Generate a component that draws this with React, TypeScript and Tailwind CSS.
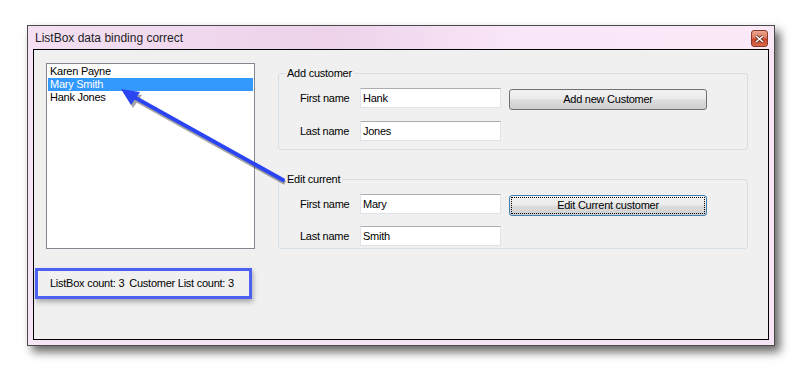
import React from "react";

const font = { fontFamily: '"Liberation Sans", Arial, sans-serif' };

function TextBox({ value }: { value: string }) {
  return (
    <div className="flex h-[20px] w-[141px] items-center border border-[#e2e3ea] border-t-[#abadb3] bg-white pl-[2px] text-[11px] tracking-[-0.25px] text-black">
      {value}
    </div>
  );
}

function Button({ label, focused }: { label: string; focused?: boolean }) {
  return (
    <div
      className={
        "ml-[8px] mt-[1px] flex h-[21px] w-[198px] shrink-0 items-center justify-center rounded-[3px] border bg-[linear-gradient(to_bottom,#f2f2f2_0%,#ebebeb_48%,#dddddd_52%,#cfcfcf_100%)] text-[11px] tracking-[-0.25px] text-black " +
        (focused ? "border-[#3c7fb1] p-[1px]" : "border-[#707070]")
      }
    >
      {focused ? (
        <div className="flex h-full w-full items-center justify-center border border-dotted border-black">
          {label}
        </div>
      ) : (
        label
      )}
    </div>
  );
}

function Row({ label, value, button }: { label: string; value: string; button?: React.ReactNode }) {
  return (
    <div className="flex h-[20px] items-start">
      <span className="w-[60px] self-center text-[11px] tracking-[-0.25px] text-black">{label}</span>
      <TextBox value={value} />
      {button}
    </div>
  );
}

function Group({ title, children, className }: { title: string; children: React.ReactNode; className?: string }) {
  return (
    <div className={"relative w-[470px] rounded-[3px] border border-[#d5dfe5] pl-[21px] pt-[14px] " + (className ?? "")}>
      <span className="absolute left-[6px] top-[-7px] bg-[#f0f0f0] px-[2px] text-[11px] leading-[13px] tracking-[-0.25px] text-black">
        {title}
      </span>
      {children}
    </div>
  );
}

export default function App() {
  const items = ["Karen Payne", "Mary Smith", "Hank Jones"];
  return (
    <div className="relative h-[376px] w-[802px] overflow-hidden bg-white pl-[27px] pt-[25px]" style={font}>
      {/* Window */}
      <div className="flex h-[321px] w-[748px] flex-col border border-[#4a4a4a] bg-[#f7e5f5] px-[5px] pb-[5px] shadow-[5px_6px_9px_rgba(0,0,0,0.6)]">
        {/* Title bar */}
        <div className="-mx-[5px] flex h-[23px] items-center justify-between bg-[linear-gradient(to_right,#f4e0f2_0%,#edd2ea_40%,#f9e6f7_65%,#fbe9f8_100%)] px-[5px]">
          <span className="pl-[2px] text-[12px] text-[#1e1e1e]">ListBox data binding correct</span>
          <div className="mr-[1px] mt-[4px] flex h-[17px] w-[17px] self-start items-center justify-center rounded-[3px] border border-[#8c3a2a] bg-[linear-gradient(to_bottom,#eba590_0%,#de7a5e_45%,#c9452a_55%,#d8694c_100%)]">
            <svg width="9" height="8" viewBox="0 0 9 8">
              <path d="M1 1 L8 7 M8 1 L1 7" stroke="#5a2a20" strokeWidth="3" />
              <path d="M1 1 L8 7 M8 1 L1 7" stroke="#ffffff" strokeWidth="1.6" />
            </svg>
          </div>
        </div>

        {/* Client area */}
        <div className="flex flex-1 border border-black bg-[#f0f0f0]">
          {/* Left column */}
          <div className="flex w-[221px] flex-col">
            <div className="ml-[12px] mt-[13px] h-[186px] w-[209px] border border-[#828790] bg-white px-[1px] pt-[1px]">
              {items.map((it, i) => (
                <div
                  key={it}
                  className={
                    "h-[13px] pl-[2px] text-[11px] leading-[13px] tracking-[-0.25px] " +
                    (i === 1 ? "bg-[#3399ff] text-white" : "text-black")
                  }
                >
                  {it}
                </div>
              ))}
            </div>
            <div className="ml-[1px] mt-[19px] flex h-[31px] w-[217px] items-center gap-[5px] border-[3px] border-[#4d60f4] pl-[12px] text-[11px] tracking-[-0.25px] text-black shadow-[1px_3px_5px_rgba(0,0,0,0.3)]">
              <span>ListBox count: 3</span>
              <span>Customer List count: 3</span>
            </div>
          </div>

          {/* Right column */}
          <div className="ml-[23px] mt-[23px] flex flex-col">
            <Group title="Add customer" className="h-[77px]">
              <div className="flex flex-col gap-[13px]">
                <Row label="First name" value="Hank" button={<Button label="Add new Customer" />} />
                <Row label="Last name" value="Jones" />
              </div>
            </Group>
            <Group title="Edit current" className="mt-[29px] h-[70px]">
              <div className="flex flex-col gap-[12px]">
                <Row label="First name" value="Mary" button={<Button label="Edit Current customer" focused />} />
                <Row label="Last name" value="Smith" />
              </div>
            </Group>
          </div>
        </div>
      </div>

      {/* Annotation arrow */}
      <svg className="pointer-events-none absolute left-0 top-0" width="802" height="376" viewBox="0 0 802 376">
        <g opacity="0.35" transform="translate(2 3)">
          <line x1="283" y1="180" x2="134" y2="97" stroke="#000" strokeWidth="4" />
          <polygon points="121,89 140,92 131,105" fill="#000" />
        </g>
        <line x1="283" y1="180" x2="134" y2="97" stroke="#2b45f2" strokeWidth="4" strokeLinecap="round" />
        <polygon points="121,89 140,92 131,105" fill="#2b45f2" />
      </svg>
    </div>
  );
}
